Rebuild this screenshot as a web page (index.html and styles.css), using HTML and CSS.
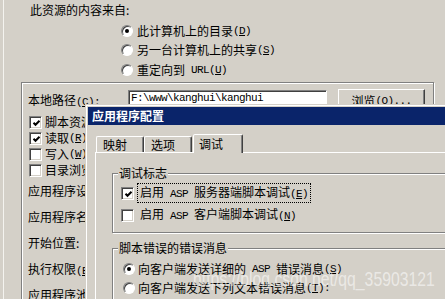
FILE: index.html
```html
<!DOCTYPE html>
<html lang="zh-CN">
<head>
  <meta charset="UTF-8">
  <meta name="viewport" content="width=device-width, initial-scale=1.0">
  <title>应用程序配置</title>
  <link rel="stylesheet" href="styles.css">
</head>
<body>
  <div class="sheet">
    <div class="source-label">此资源的内容来自:</div>
    <div class="source-options">
      <div class="opt"><span class="radio on"></span>此计算机上的目录<span class="en">(<u>D</u>)</span></div>
      <div class="opt"><span class="radio"></span>另一台计算机上的共享<span class="en">(<u>S</u>)</span></div>
      <div class="opt"><span class="radio"></span>重定向到<span class="en"> URL(<u>U</u>)</span></div>
    </div>

    <div class="group outer">
      <div class="path-row">
        <span class="path-label">本地路径<span class="en">(<u>C</u>):</span></span>
        <div class="textbox en">F:\www\kanghui\kanghui</div>
        <div class="button">浏览<span class="en">(<u>O</u>)...</span></div>
      </div>
      <div class="checks">
        <div class="check-row">
          <span class="check"><svg width="9" height="9" viewBox="0 0 9 9"><polyline points="1.5,3.8 3.5,5.8 7.5,1.8" fill="none" stroke="#000" stroke-width="2"/></svg></span>脚本资源访问
        </div>
        <div class="check-row">
          <span class="check"><svg width="9" height="9" viewBox="0 0 9 9"><polyline points="1.5,3.8 3.5,5.8 7.5,1.8" fill="none" stroke="#000" stroke-width="2"/></svg></span>读取<span class="en">(<u>R</u>)</span>
        </div>
        <div class="check-row"><span class="check"></span>写入<span class="en">(<u>W</u>)</span></div>
        <div class="check-row"><span class="check"></span>目录浏览</div>
      </div>
      <div class="settings">
        <div class="setting">应用程序设置</div>
        <div class="setting">应用程序名称:</div>
        <div class="setting">开始位置:</div>
        <div class="setting">执行权限<span class="en">(<u>E</u>):</span></div>
        <div class="setting">应用程序池<span class="en">(<u>N</u>):</span></div>
      </div>
    </div>
  </div>

  <!-- modal dialog on top of the property sheet -->
  <div class="dialog">
    <div class="titlebar">应用程序配置</div>
    <div class="dialog-body">
      <div class="tabs">
        <div class="tab">映射</div>
        <div class="tab">选项</div>
        <div class="tab active">调试</div>
      </div>
      <div class="tab-panel">
        <div class="group">
          <span class="group-title">调试标志</span>
          <div class="row">
            <span class="check"><svg width="9" height="9" viewBox="0 0 9 9"><polyline points="1.5,3.8 3.5,5.8 7.5,1.8" fill="none" stroke="#000" stroke-width="2"/></svg></span>
            <span class="label focus">启用<span class="en"> ASP </span>服务器端脚本调试<span class="en">(<u>E</u>)</span></span>
          </div>
          <div class="row">
            <span class="check"></span>
            <span class="label">启用<span class="en"> ASP </span>客户端脚本调试<span class="en">(<u>N</u>)</span></span>
          </div>
        </div>
        <div class="group errors">
          <span class="group-title">脚本错误的错误消息</span>
          <div class="row radio-row"><span class="radio on"></span>向客户端发送详细的<span class="en"> ASP </span>错误消息<span class="en">(<u>S</u>)</span></div>
          <div class="row radio-row"><span class="radio"></span>向客户端发送下列文本错误消息<span class="en">(<u>T</u>):</span></div>
        </div>
      </div>
    </div>
  </div>

  <div class="watermark">https://blog.csdn.net/qq_35903121</div>
</body>
</html>
```

FILE: styles.css
```css
body {
  margin: 0;
  width: 445px;
  height: 299px;
  overflow: hidden;
  position: relative;
  background: #d4d0c8;
  color: #000;
  font: 12px/14px "Noto Sans CJK SC", sans-serif;
}
.en {
  font-family: "Liberation Mono", monospace;
  font-size: 11px;
  letter-spacing: -0.6px;
  white-space: pre;
}
.sheet {
  margin-left: 3px;
  height: 299px;
  border-left: 1px solid #f4f3ef;
  padding-top: 3px;
  box-sizing: border-box;
}
.source-label {
  padding-left: 26px;
}
.source-options {
  margin-top: 4px;
}
.opt {
  height: 19.5px;
  display: flex;
  align-items: center;
  padding-left: 117px;
}

/* classic controls */
.radio {
  width: 12px;
  height: 12px;
  box-sizing: border-box;
  border-radius: 50%;
  border: 1px solid;
  border-color: #808080 #fff #fff #808080;
  box-shadow: inset 1px 1px 0 #404040;
  background: #fff;
  margin-right: 4px;
  display: flex;
  align-items: center;
  justify-content: center;
  flex: none;
}
.radio.on::after {
  content: "";
  width: 4px;
  height: 4px;
  border-radius: 50%;
  background: #000;
}
.check {
  width: 13px;
  height: 13px;
  box-sizing: border-box;
  border: 1px solid;
  border-color: #808080 #fff #fff #808080;
  box-shadow: inset 1px 1px 0 #404040, inset -1px -1px 0 #d4d0c8;
  background: #fff;
  padding: 1px 0 0 1px;
  flex: none;
}
.check svg {
  display: block;
  margin: 1px 0 0 1px;
}
.group {
  position: relative;
  border: 1px solid #808080;
  box-shadow: 1px 1px 0 #fff, inset 1px 1px 0 #fff;
}
.group-title {
  position: absolute;
  top: -8px;
  left: 5px;
  padding: 0 1px;
  background: #d4d0c8;
}

/* outer property sheet */
.outer {
  margin: 2.5px 0 0 17px;
  width: 413px;
  height: 240px;
  box-sizing: border-box;
  padding: 6px 0 0 6px;
}
.path-row {
  display: flex;
  height: 23px;
}
.path-label {
  width: 100px;
  align-self: center;
}
.textbox {
  margin-top: 1px;
  width: 199px;
  height: 17px;
  box-sizing: border-box;
  border: 1px solid;
  border-color: #808080 #fff #fff #808080;
  box-shadow: inset 1px 1px 0 #404040;
  background: #fff;
  padding-left: 2px;
  line-height: 15px;
}
.button {
  margin-left: 11px;
  width: 87px;
  height: 23px;
  box-sizing: border-box;
  border: 1px solid;
  border-color: #fff #404040 #404040 #fff;
  box-shadow: inset -1px -1px 0 #808080;
  display: flex;
  align-items: center;
  justify-content: center;
}
.checks {
  margin-top: 2px;
}
.check-row {
  height: 16px;
  display: flex;
  align-items: center;
  padding-left: 1px;
}
.check-row .check {
  margin-right: 3px;
}
.setting {
  height: 26px;
  line-height: 26px;
}

/* application configuration dialog */
.dialog {
  position: absolute;
  left: 85px;
  top: 104px;
  width: 420px;
  height: 230px;
  border: 1px solid;
  border-color: #d4d0c8 #404040 #404040 #d4d0c8;
  box-shadow: inset 1px 1px 0 #fff, inset -1px -1px 0 #808080;
  padding: 2px;
  background: #d4d0c8;
}
.titlebar {
  height: 18px;
  line-height: 18px;
  padding-left: 4px;
  background: #0a246a;
  color: #fff;
  font-weight: bold;
}
.dialog-body {
  padding: 9px 0 0 7px;
}
.tabs {
  display: flex;
  align-items: flex-end;
  height: 18px;
  padding-left: 1px;
}
.tab {
  width: 48px;
  height: 16px;
  box-sizing: border-box;
  border: 1px solid;
  border-bottom: none;
  border-color: #fff #404040 transparent #fff;
  border-radius: 2px 2px 0 0;
  box-shadow: inset -1px 0 0 #808080;
  padding-left: 6px;
  line-height: 15px;
}
.tab.active {
  position: relative;
  z-index: 1;
  width: 50px;
  height: 19px;
  margin: 0 0 -1px 1px;
  background: #d4d0c8;
  padding-left: 5px;
  line-height: 17px;
}
.tab-panel {
  border-top: 1px solid #fff;
  border-left: 1px solid #fff;
  padding: 20px 0 0 16px;
  height: 160px;
}
.tab-panel .group {
  width: 380px;
  padding: 8px 0 6px 8px;
}
.row {
  height: 22px;
  display: flex;
  align-items: center;
}
.label {
  margin-left: 3px;
  border: 1px dotted transparent;
  padding: 0 2px;
  line-height: 16px;
}
.label.focus {
  border-color: #000;
}
.tab-panel .errors {
  margin-top: 15px;
  padding: 10px 0 0 10px;
  height: 60px;
}
.radio-row {
  height: 19px;
}
.radio-row .radio {
  margin-right: 3px;
}

.watermark {
  position: absolute;
  left: 193px;
  top: 268px;
  font: 21px/21px "Liberation Sans", sans-serif;
  color: rgba(255, 255, 255, 0.55);
  white-space: nowrap;
  transform: scaleX(0.75);
  transform-origin: left top;
}
```
